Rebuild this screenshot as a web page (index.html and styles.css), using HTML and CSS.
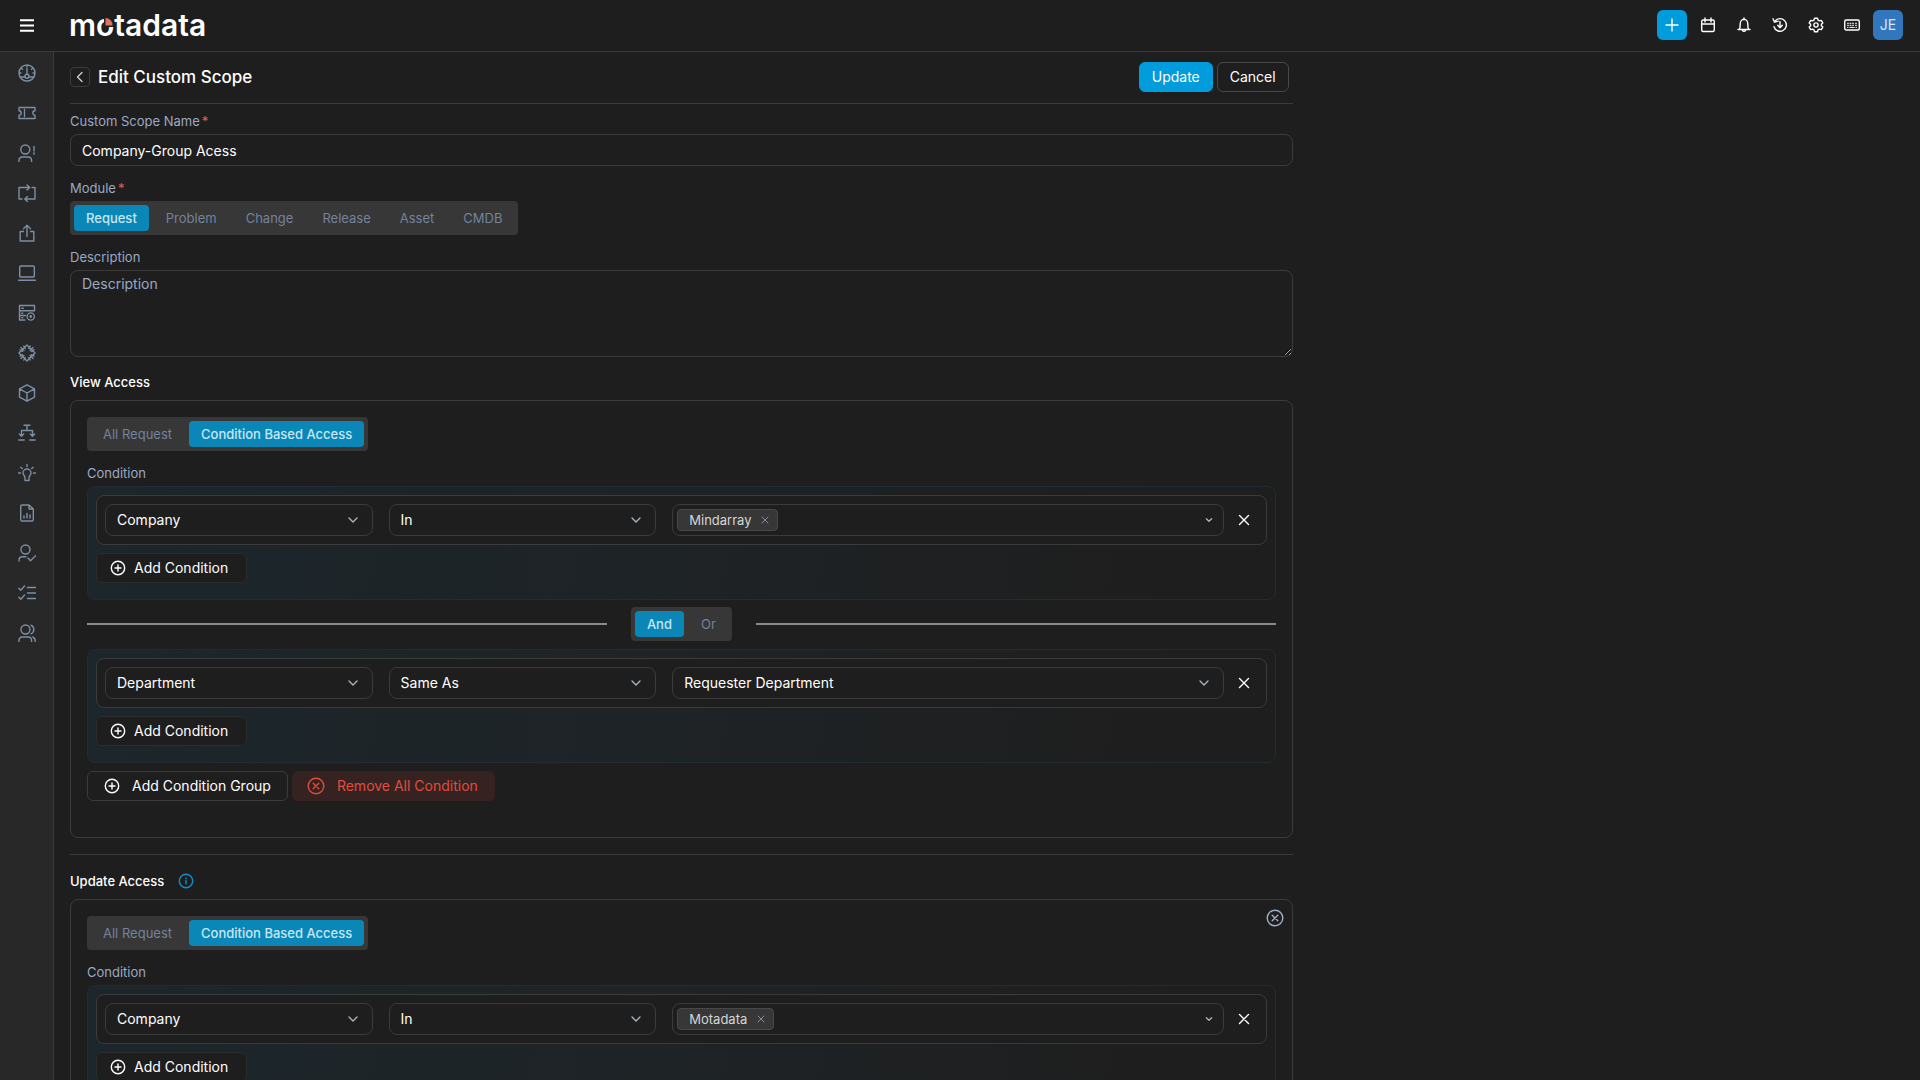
FILE: index.html
```html
<!DOCTYPE html>
<html lang="en">
<head>
<meta charset="utf-8">
<title>Edit Custom Scope</title>
<link rel="stylesheet" href="styles.css">
</head>
<body>
<svg class="sprite" aria-hidden="true">
  <symbol id="chevron" viewBox="0 0 12 12"><path d="M2 4l4 4 4-4"/></symbol>
  <symbol id="close" viewBox="0 0 12 12"><path d="M1.5 1.5l9 9M10.500 1.500l-9 9"/></symbol>
  <symbol id="plus-circle" viewBox="0 0 16 16"><circle cx="8" cy="8" r="6.700"/><path d="M8 5v6M5 8h6"/></symbol>
  <symbol id="x-circle" viewBox="0 0 18 18"><circle cx="9" cy="9" r="7.800"/><path d="M6.200 6.200l5.600 5.600M11.800 6.200l-5.600 5.600"/></symbol>
</svg>

<header class="topbar">
  <button class="menu-btn" aria-label="Menu"><svg class="ic-menu" viewBox="0 0 14 13"><path d="M0 1.200h14M0 6.500h14M0 11.800h14"/></svg></button>
  <a class="logo" href="#" aria-label="motadata">m<span class="logo-o">o<svg class="logo-pie" viewBox="0 0 10 10"><path class="pie-gap" d="M0 0h10v10H0z"/><path class="pie" d="M1.500 1a7 7 0 0 1 7 7.500h-7z"/></svg></span>tadata</a>
  <nav class="tools" aria-label="Tools">
    <button class="add-btn" aria-label="Create"><svg class="ic14" viewBox="0 0 14 14"><path d="M7 1v12M1 7h12"/></svg></button>
    <button class="tool" aria-label="Calendar"><svg class="ic16" viewBox="0 0 16 16"><rect x="1.700" y="3" width="12.600" height="11.500" rx="1.500"/><path d="M1.700 7h12.600M5 1v4M11 1v4"/></svg></button>
    <button class="tool" aria-label="Notifications"><svg class="ic16" viewBox="0 0 16 16"><path d="M2 12.500h12M3.500 12.300c.6-1.200.7-2.500.7-5.300a3.800 4.800 0 0 1 7.600 0c0 2.800.1 4.100.7 5.300M6.500 13.500a1.600 1.400 0 0 0 3 0M8 1v1.500"/></svg></button>
    <button class="tool" aria-label="History"><svg class="ic16" viewBox="0 0 16 16"><path d="M3 4.200a6.300 6.300 0 1 1-1 5.500M1 1.800l1.600 3.400 3.600-1M8 4.500v6M5.700 8.300L8 10.700l2.300-2.400"/></svg></button>
    <button class="tool" aria-label="Settings"><svg class="ic16" viewBox="0 0 16 16"><path d="M6.500 1.200h3l.5 1.900 1.400.8 1.900-.5 1.500 2.500L13.400 7.200v1.600l1.400 1.300-1.500 2.500-1.900-.5-1.400.8-.5 1.900h-3l-.5-1.900-1.400-.8-1.900.5-1.500-2.500 1.400-1.300V7.200L1.200 5.900l1.500-2.500 1.900.5L6 3.100z"/><circle cx="8" cy="8" r="2.100"/></svg></button>
    <button class="tool" aria-label="Keyboard shortcuts"><svg class="ic16 keyboard" viewBox="0 0 16 16"><rect x=".7" y="3" width="14.600" height="10" rx="1.500"/><path d="M3.500 6.300h1M6 6.300h1M8.500 6.300h1M11.500 6.300h1M3.500 8.300h1M6 8.300h1M8.500 8.300h1M11.500 8.300h1M3.500 10.400h.5M5.800 10.400h4.400M12 10.400h.5"/></svg></button>
    <button class="avatar" aria-label="Account">JE</button>
  </nav>
</header>

<div class="shell">
  <nav class="sidebar" aria-label="Modules">
    <a href="#" aria-label="Dashboard"><svg viewBox="0 0 18 18"><circle cx="9" cy="9" r="8"/><path d="M9 4.500v6M9 1.500v1.500M3.500 4.200l1 1M14.500 4.200l-1 1M1.500 9H3M15 9h1.500M2 13h4.800M11.200 13H16"/><circle cx="9" cy="12.200" r="2"/></svg></a>
    <a href="#" aria-label="Requests"><svg viewBox="0 0 18 18"><path d="M1 3.500h16v3.300a2.200 2.200 0 0 0 0 4.400v3.300H1v-3.300a2.200 2.200 0 0 0 0-4.400zM6.500 5.500v1.700M6.500 8.200v1.700M6.500 10.800v1.700"/></svg></a>
    <a href="#" aria-label="Problems"><svg viewBox="0 0 18 18"><circle cx="7.300" cy="5.500" r="4.500"/><path d="M1 17.500v-.7c0-2.200 1.300-3.800 3.300-3.800h6c2 0 3.300 1.600 3.300 3.800v.7M16 2.500v4.500M16 8.700v1.500"/></svg></a>
    <a href="#" aria-label="Changes"><svg viewBox="0 0 18 18"><path d="M4 15H1V3.500h10.500M9 1l2.700 2.500L9 6M14 3.500h3V15H7M9.500 12.500L6.800 15l2.700 2.500"/></svg></a>
    <a href="#" aria-label="Releases"><svg viewBox="0 0 18 18"><path d="M5.500 7.500H2.200V17h13.600V7.500h-3.300M9 12.500V1.300M5.500 4.700L9 1.200l3.500 3.500"/></svg></a>
    <a href="#" aria-label="Assets"><svg viewBox="0 0 18 18"><rect x="1.700" y="2" width="14.600" height="11" rx="1"/><path d="M.5 16.300h17"/></svg></a>
    <a href="#" aria-label="CMDB"><svg viewBox="0 0 18 18"><path d="M7 16H1.500V1.500h15v5.300H1.500M1.500 11.500h6M3.800 4.200h1.500M3.800 9.200h1M3.800 13.700h1"/><circle cx="12.700" cy="12.500" r="3.600"/><circle cx="12.700" cy="12.500" r=".7"/></svg></a>
    <a href="#" aria-label="Patches"><svg viewBox="0 0 18 18"><path d="M6.800 3.200L9 1l2.200 2.200M14.800 6.800L17 9l-2.200 2.200M11.200 14.800L9 17l-2.200-2.200M3.200 11.200L1 9l2.200-2.200M6.800 3.200L3.200 6.800M11.200 3.200l3.600 3.600M14.800 11.200l-3.600 3.600M6.800 14.800l-3.600-3.600M3 3.500L6 6.500M15 3.500L12 6.500M15 14.500L12 11.500M3 14.500L6 11.500M5.800 2l1.500 2.500M12.200 2l-1.500 2.500M5.800 16l1.500-2.500M12.200 16l-1.500-2.500M2 5.800l2.500 1.500M2 12.200l2.500-1.500M16 5.800l-2.500 1.500M16 12.200l-2.500-1.500"/></svg></a>
    <a href="#" aria-label="Packages"><svg viewBox="0 0 18 18"><path d="M9 .8l7.500 4v8.400L9 17.200l-7.500-4V4.800zM1.500 4.800L9 9l7.500-4.200M9 9v8.200"/></svg></a>
    <a href="#" aria-label="Workflow"><svg viewBox="0 0 18 18"><path d="M6 1.200h6M9 1.200v5.300M3.500 12V6.500h11V12M1.300 10l2.200 2.300L5.700 10M12.300 10l2.200 2.300 2.200-2.300M.8 16h5.400M11.800 16h5.400"/></svg></a>
    <a href="#" aria-label="Knowledge"><svg viewBox="0 0 18 18"><path d="M7 13.200c0-1.200-2-2-2-4.200a4 4 0 0 1 8 0c0 2.200-2 3-2 4.200v3.300H7zM9 .5v2M.5 9h2M15.500 9h2M2.800 3.200l1.500 1.300M15.200 3.200l-1.500 1.300"/></svg></a>
    <a href="#" aria-label="Reports"><svg viewBox="0 0 18 18"><path d="M11 1H4a1.300 1.300 0 0 0-1.300 1.300v13.400A1.300 1.300 0 0 0 4 17h10a1.300 1.300 0 0 0 1.300-1.300V5zM11 1v4h4.300M6 14v-2M9 14V9.500M12 14v-3"/></svg></a>
    <a href="#" aria-label="Approvals"><svg viewBox="0 0 18 18"><circle cx="7.500" cy="5.500" r="4.500"/><path d="M1 17v-.5c0-2.200 1.300-3.700 3.300-3.700H8M10 14l2.500 2.700 5-5"/></svg></a>
    <a href="#" aria-label="Tasks"><svg viewBox="0 0 18 18"><path d="M.8 4.200l2 2L6.500 2M.8 13.200l2 2L6.500 11M9.500 3.500h8M9.500 9h8M9.500 14.500h8"/></svg></a>
    <a href="#" aria-label="Users"><svg viewBox="0 0 18 18"><circle cx="7.500" cy="5.500" r="4.500"/><path d="M1 17.500v-.7c0-2.200 1.300-3.800 3.300-3.800h6c2 0 3.300 1.600 3.300 3.800v.7M13 1.200a4.700 4.700 0 0 1 0 8.600M14.800 13c1.700.6 2.400 2 2.400 4v.5"/></svg></a>
  </nav>

  <main class="main">
    <form class="form">
      <div class="title-row">
        <button type="button" class="back" aria-label="Back"><svg class="ic12" viewBox="0 0 12 12"><path d="M8 1.500L3.500 6 8 10.500"/></svg></button>
        <h1>Edit Custom Scope</h1>
        <button type="button" class="btn primary">Update</button>
        <button type="button" class="btn">Cancel</button>
      </div>

      <div class="field">
        <label for="name">Custom Scope Name<span class="req">*</span></label>
        <input id="name" class="text-input" type="text" value="Company-Group Acess">
      </div>

      <div class="field">
        <span class="label" id="module-label">Module<span class="req">*</span></span>
        <div class="segmented" role="radiogroup" aria-labelledby="module-label">
          <label class="seg"><input type="radio" name="module" checked><span>Request</span></label>
          <label class="seg"><input type="radio" name="module"><span>Problem</span></label>
          <label class="seg"><input type="radio" name="module"><span>Change</span></label>
          <label class="seg"><input type="radio" name="module"><span>Release</span></label>
          <label class="seg"><input type="radio" name="module"><span>Asset</span></label>
          <label class="seg"><input type="radio" name="module"><span>CMDB</span></label>
        </div>
      </div>

      <div class="field">
        <label for="desc">Description</label>
        <textarea id="desc" class="text-input area" placeholder="Description"></textarea>
      </div>

      <h2>View Access</h2>
      <section class="card">
        <div class="segmented" role="radiogroup" aria-label="View access">
          <label class="seg"><input type="radio" name="view"><span>All Request</span></label>
          <label class="seg"><input type="radio" name="view" checked><span>Condition Based Access</span></label>
        </div>
        <div class="field">
          <span class="label">Condition</span>
          <div class="group">
            <div class="rule">
              <div class="select"><select aria-label="Attribute"><option>Company</option></select><svg class="chev"><use href="#chevron"/></svg></div>
              <div class="select"><select aria-label="Operator"><option>In</option></select><svg class="chev"><use href="#chevron"/></svg></div>
              <div class="value">
                <div class="tags"><span class="tag">Mindarray<button type="button" class="tag-x" aria-label="Remove Mindarray"><svg class="ic8"><use href="#close"/></svg></button></span><svg class="chev small"><use href="#chevron"/></svg></div>
                <button type="button" class="remove" aria-label="Remove condition"><svg class="ic12"><use href="#close"/></svg></button>
              </div>
            </div>
            <button type="button" class="btn add"><svg class="ic16"><use href="#plus-circle"/></svg>Add Condition</button>
          </div>
          <div class="joiner">
            <div class="segmented" role="radiogroup" aria-label="Join">
              <label class="seg"><input type="radio" name="join" checked><span>And</span></label>
              <label class="seg"><input type="radio" name="join"><span>Or</span></label>
            </div>
          </div>
          <div class="group">
            <div class="rule">
              <div class="select"><select aria-label="Attribute"><option>Department</option></select><svg class="chev"><use href="#chevron"/></svg></div>
              <div class="select"><select aria-label="Operator"><option>Same As</option></select><svg class="chev"><use href="#chevron"/></svg></div>
              <div class="value">
                <div class="select"><select aria-label="Value"><option>Requester Department</option></select><svg class="chev"><use href="#chevron"/></svg></div>
                <button type="button" class="remove" aria-label="Remove condition"><svg class="ic12"><use href="#close"/></svg></button>
              </div>
            </div>
            <button type="button" class="btn add"><svg class="ic16"><use href="#plus-circle"/></svg>Add Condition</button>
          </div>
        </div>
        <div class="actions">
          <button type="button" class="btn wide"><svg class="ic16"><use href="#plus-circle"/></svg>Add Condition Group</button>
          <button type="button" class="btn wide danger"><svg class="ic18"><use href="#x-circle"/></svg>Remove All Condition</button>
        </div>
      </section>

      <hr>

      <h2>Update Access <svg class="ic16 info" viewBox="0 0 16 16"><circle cx="8" cy="8" r="6.700"/><path d="M8 7.300v3.500M8 4.900v.5"/></svg></h2>
      <section class="card">
        <button type="button" class="card-close" aria-label="Remove update access"><svg class="ic18"><use href="#x-circle"/></svg></button>
        <div class="segmented" role="radiogroup" aria-label="Update access">
          <label class="seg"><input type="radio" name="update"><span>All Request</span></label>
          <label class="seg"><input type="radio" name="update" checked><span>Condition Based Access</span></label>
        </div>
        <div class="field">
          <span class="label">Condition</span>
          <div class="group">
            <div class="rule">
              <div class="select"><select aria-label="Attribute"><option>Company</option></select><svg class="chev"><use href="#chevron"/></svg></div>
              <div class="select"><select aria-label="Operator"><option>In</option></select><svg class="chev"><use href="#chevron"/></svg></div>
              <div class="value">
                <div class="tags"><span class="tag">Motadata<button type="button" class="tag-x" aria-label="Remove Motadata"><svg class="ic8"><use href="#close"/></svg></button></span><svg class="chev small"><use href="#chevron"/></svg></div>
                <button type="button" class="remove" aria-label="Remove condition"><svg class="ic12"><use href="#close"/></svg></button>
              </div>
            </div>
            <button type="button" class="btn add"><svg class="ic16"><use href="#plus-circle"/></svg>Add Condition</button>
          </div>
        </div>
      </section>
    </form>
  </main>
</div>
</body>
</html>
```
FILE: styles.css
```css
:root {
  --bg: #1e1e1e;
  --side: #282828;
  --line: #3b3b3b;
  --seg: #373737;
  --blue: #019cdc;
  --blue-dim: #0b87b7;
  --muted: #9aa9c4;
  --dim: #74829b;
  --icon: #7b8fa5;
}

* { box-sizing: border-box; }

body {
  margin: 0;
  height: 100vh;
  display: flex;
  flex-direction: column;
  overflow: hidden;
  background: var(--bg);
  color: #fff;
  font: 400 14px/18px Inter, "Liberation Sans", sans-serif;
}

button, input, select, textarea { font: inherit; color: inherit; }
button { padding: 0; border: 0; background: none; cursor: pointer; }
svg { display: block; flex: none; fill: none; stroke: currentColor; stroke-width: 1.4; stroke-linecap: round; stroke-linejoin: round; }
.sprite { position: absolute; width: 0; height: 0; }
.ic8 { width: 8px; height: 8px; }
.ic12 { width: 12px; height: 12px; }
.ic14 { width: 14px; height: 14px; }
.ic16 { width: 16px; height: 16px; }
.ic18 { width: 18px; height: 18px; }

/* Top bar */
.topbar {
  flex: none;
  height: 52px;
  display: flex;
  align-items: center;
  padding: 0 17px 1px 20px;
  border-bottom: 1px solid var(--line);
}
.ic-menu { width: 14px; height: 13px; stroke-width: 2; stroke-linecap: butt; }
.logo {
  margin-left: 35px;
  color: #fff;
  text-decoration: none;
  font-size: 30px;
  line-height: 36px;
  font-weight: 600;
}
.logo-o { position: relative; }
.logo-pie { position: absolute; right: 0; top: 10px; width: 10px; height: 10px; stroke: none; }
.pie-gap { fill: var(--bg); }
.pie { fill: #e0705f; }
.tools { margin-left: auto; display: flex; align-items: center; }
.tool { width: 36px; height: 30px; display: grid; place-items: center; }
.keyboard path { stroke-width: 1; }
.add-btn, .avatar { width: 30px; height: 30px; border-radius: 6px; display: grid; place-items: center; }
.add-btn { background: var(--blue); margin-right: 3px; }
.avatar { background: #3277bd; color: #d5e6f5; margin-left: 3px; }

/* Module rail */
.shell { flex: 1; min-height: 0; display: flex; }
.sidebar {
  flex: none;
  width: 54px;
  padding-top: 1px;
  background: var(--side);
  border-right: 1px solid var(--line);
}
.sidebar a { height: 40px; display: grid; place-items: center; color: var(--icon); }
.sidebar svg { width: 18px; height: 18px; }

/* Form */
.main { flex: 1; min-width: 0; padding: 10px 16px; overflow: auto; scrollbar-width: none; }
.form { width: 66.667%; }
.title-row {
  display: flex;
  align-items: center;
  gap: 4px;
  padding: 0 4px 11px 0;
  border-bottom: 1px solid var(--line);
  margin-bottom: 8px;
}
h1 { flex: 1; margin: 0 0 0 4px; font-size: 17px; line-height: 24px; font-weight: 500; }
.back {
  width: 20px;
  height: 20px;
  display: grid;
  place-items: center;
  border: 1px solid var(--line);
  border-radius: 4px;
  color: #c5cedb;
}
.btn {
  height: 30px;
  padding: 0 12px;
  display: inline-flex;
  align-items: center;
  border: 1px solid #484848;
  border-radius: 6px;
  background: var(--bg);
}
.btn.primary { background: var(--blue); border-color: var(--blue); }

.field { margin-bottom: 13px; }
.field > label, .label { display: block; margin-bottom: 4px; font-size: 13px; color: var(--muted); }
.req { margin-left: 2px; color: #ef5843; }
.text-input {
  display: block;
  width: 100%;
  height: 32px;
  padding: 0 11px;
  border: 1px solid var(--line);
  border-radius: 8px;
  background: none;
}
.area { height: 87px; padding-top: 4px; resize: vertical; }
.area::placeholder { color: var(--muted); opacity: 1; }

.segmented { display: flex; width: fit-content; gap: 5px; padding: 4px; border-radius: 4px; background: var(--seg); }
.seg { position: relative; display: flex; }
.seg input { position: absolute; inset: 0; width: 100%; height: 100%; margin: 0; opacity: 0; cursor: pointer; }
.seg span { padding: 4px 12px; border-radius: 4px; font-size: 13px; color: var(--dim); }
.seg input:checked + span { background: var(--blue-dim); color: #c5e7f5; font-weight: 500; }

h2 { display: flex; align-items: center; gap: 14px; margin: 16px 0 9px; font-size: 13px; line-height: 18px; font-weight: 500; }
.info { color: #0f8fc9; }
hr { margin: 16px 0 17px; border: 0; border-top: 1px solid var(--line); }
.card { position: relative; padding: 16px 16px 36px; border: 1px solid var(--line); border-radius: 8px; }
.card-close { position: absolute; top: 9px; right: 8px; color: #9db0c2; }
.card .field { margin: 13px 0 8px; }

.group {
  padding: 8px 8px 16px;
  border: 1px solid #202d33;
  border-radius: 8px;
  background: linear-gradient(100deg, #1c262b 0%, #1e2326 50%, #1e1e1e 90%);
}
.rule {
  display: grid;
  grid-template-columns: 1fr 1fr 2.18fr;
  gap: 16px;
  padding: 8px 10px 8px 8px;
  margin-bottom: 8px;
  border: 1px solid var(--line);
  border-radius: 8px;
  background: var(--bg);
}
.select { display: grid; align-items: center; flex: 1; min-width: 0; }
.select > * { grid-area: 1 / 1; }
.select select {
  appearance: none;
  width: 100%;
  height: 32px;
  padding: 0 32px 0 11px;
  border: 1px solid var(--line);
  border-radius: 8px;
  background: var(--bg);
}
.chev { width: 12px; height: 12px; justify-self: end; margin-right: 14px; color: #a5b5c2; pointer-events: none; }
.chev.small { width: 8px; height: 8px; margin: 0 6px 0 auto; stroke-width: 2; }
.value { display: flex; align-items: center; gap: 8px; min-width: 0; }
.tags { flex: 1; display: flex; align-items: center; height: 32px; padding: 0 4px; border: 1px solid var(--line); border-radius: 8px; }
.tag {
  display: flex;
  align-items: center;
  gap: 10px;
  height: 22px;
  padding: 0 8px 0 11px;
  border: 1px solid #484848;
  border-radius: 4px;
  background: var(--seg);
  color: #d5d5d5;
  font-size: 13px;
}
.tag-x { color: #8595a8; }
.remove { width: 24px; height: 24px; display: grid; place-items: center; }
.btn.add { padding: 0 18px 0 13px; gap: 8px; border-color: #2a2d2f; }

.joiner { display: flex; align-items: center; gap: 24px; margin: 7px 0 8px; }
.joiner::before, .joiner::after { content: ""; flex: 1; height: 2px; background: #8a8a8a; }
.actions { display: flex; gap: 4px; }
.btn.wide { padding: 0 16px; gap: 12px; border-color: var(--line); }
.btn.danger { padding-left: 14px; background: #362221; border-color: #362221; color: #e04d3d; }
```
